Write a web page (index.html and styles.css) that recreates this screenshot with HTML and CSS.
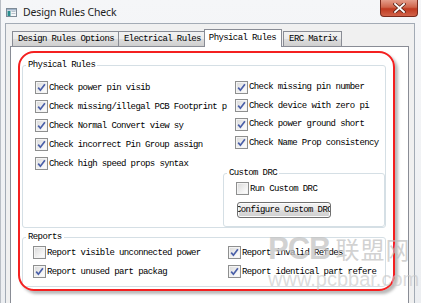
FILE: index.html
```html
<!DOCTYPE html>
<html>
<head>
<meta charset="utf-8">
<link rel="stylesheet" href="styles.css">
</head>
<body>
<div class="window">
  <div class="titlebar">
    <svg class="appicon" width="11" height="9" viewBox="0 0 11 9">
      <rect x="0.5" y="0.5" width="10" height="8" fill="#f4f6f8" stroke="#7d8a96"/>
      <rect x="1" y="1" width="9" height="1.5" fill="#9fb3c8"/>
      <rect x="1.5" y="3" width="3" height="5" fill="#2a8c8e"/>
      <rect x="5.5" y="3" width="4" height="1" fill="#b8c2cc"/>
      <rect x="5.5" y="5" width="4" height="1" fill="#b8c2cc"/>
    </svg>
    <span class="title">Design Rules Check</span>
    <div class="close">
      <svg width="13" height="10" viewBox="0 0 13 10">
        <path d="M2 1 L11 9 M11 1 L2 9" stroke="#5a2418" stroke-width="3.4" stroke-linecap="square"/>
        <path d="M2 1 L11 9 M11 1 L2 9" stroke="#ffffff" stroke-width="1.8" stroke-linecap="square"/>
      </svg>
    </div>
  </div>
  <div class="client">
    <div class="tabs">
      <div class="tab">Design Rules Options</div>
      <div class="tab">Electrical Rules</div>
      <div class="tab active">Physical Rules</div>
      <div class="tab">ERC Matrix</div>
    </div>
    <div class="panel">
      <fieldset class="group phys">
        <legend>Physical Rules</legend>
        <div class="physgrid">
          <div class="col col1">
            <div class="cb on"><span class="box"></span><span class="lbl">Check power pin visib</span></div>
            <div class="cb on"><span class="box"></span><span class="lbl">Check missing/illegal PCB Footprint p</span></div>
            <div class="cb on"><span class="box"></span><span class="lbl">Check Normal Convert view sy</span></div>
            <div class="cb on"><span class="box"></span><span class="lbl">Check incorrect Pin Group assign</span></div>
            <div class="cb on"><span class="box"></span><span class="lbl">Check high speed props syntax</span></div>
          </div>
          <div class="col col2">
            <div class="col2checks">
              <div class="cb on"><span class="box"></span><span class="lbl">Check missing pin number</span></div>
              <div class="cb on"><span class="box"></span><span class="lbl">Check device with zero pi</span></div>
              <div class="cb on"><span class="box"></span><span class="lbl">Check power ground short</span></div>
              <div class="cb on"><span class="box"></span><span class="lbl">Check Name Prop consistency</span></div>
            </div>
            <fieldset class="group custom">
              <legend>Custom DRC</legend>
              <div class="cb"><span class="box"></span><span class="lbl">Run Custom DRC</span></div>
              <div class="btn"><span>Configure Custom DRC</span></div>
            </fieldset>
          </div>
        </div>
      </fieldset>
      <fieldset class="group reports">
        <legend>Reports</legend>
        <div class="repgrid">
          <div class="col">
            <div class="cb"><span class="box"></span><span class="lbl">Report visible unconnected power</span></div>
            <div class="cb on"><span class="box"></span><span class="lbl">Report unused part packag</span></div>
          </div>
          <div class="col">
            <div class="cb on"><span class="box"></span><span class="lbl">Report invalid Refdes</span></div>
            <div class="cb on"><span class="box"></span><span class="lbl">Report identical part refere</span></div>
          </div>
        </div>
      </fieldset>
    </div>
  </div>
  <div class="annot"></div>
  <div class="watermark">
    <span class="wm-logo">PCB</span><span class="wm-cn">联盟网</span>
    <div class="wm-url">www.pcbbar.com</div>
  </div>
</div>
</body>
</html>
```
FILE: styles.css
```css
html, body {
  margin: 0;
  padding: 0;
  background: #eef0f3;
}
.window {
  position: relative;
  width: 421px;
  height: 303px;
  overflow: hidden;
  background: linear-gradient(#f5f6f8, #eceef1);
  border-left: 1px solid #b9bec5;
  box-sizing: border-box;
}
.titlebar {
  height: 23px;
  display: flex;
  align-items: center;
  position: relative;
  padding-left: 5px;
  box-sizing: border-box;
}
.appicon {
  margin-top: 1px;
  flex: none;
}
.title {
  font-family: "Noto Sans", sans-serif;
  font-size: 10.5px;
  letter-spacing: -0.15px;
  color: #1e1e1e;
  margin-left: 6px;
  margin-top: 1px;
}
.close {
  position: absolute;
  left: 379px;
  top: 0;
  width: 38px;
  height: 17px;
  box-sizing: border-box;
  border: 1px solid #7a2a1c;
  border-top: none;
  border-radius: 0 0 4px 4px;
  background: linear-gradient(#e59d8a, #d0654b 45%, #c0391f 55%, #d1634a);
  display: flex;
  align-items: center;
  justify-content: center;
}
.client {
  margin: 0 6px 0 4px;
  border: 1px solid #a3abb5;
  border-bottom: none;
  background: #f0f0f0;
  height: 290px;
  padding: 5px 5px 0 4px;
  box-sizing: border-box;
}
.tabs {
  display: flex;
  align-items: flex-end;
  height: 17px;
  padding-left: 2px;
  position: relative;
  z-index: 2;
}
.tab {
  font-family: "Liberation Mono", monospace;
  font-size: 9px;
  letter-spacing: -0.6px;
  color: #000;
  height: 15px;
  line-height: 14px;
  padding: 0 4px 0 5px;
  box-sizing: border-box;
  border: 1px solid #898c95;
  border-bottom: none;
  margin-right: -1px;
  background: linear-gradient(#f2f2f2, #ebebeb 50%, #dddddd 51%, #cfcfcf);
  white-space: nowrap;
}
.tab.active {
  height: 18px;
  line-height: 16px;
  margin-bottom: -1px;
  background: #ffffff;
  margin-left: -1px;
  margin-right: 1px;
  padding: 0 5px 0 4px;
}
.panel {
  background: #ffffff;
  border: 1px solid #898c95;
  border-bottom: none;
  height: 260px;
  padding: 0 0 0 11px;
  box-sizing: border-box;
}
fieldset.group {
  margin: 0;
  border: 1px solid #d5dfe5;
  border-radius: 3px;
  padding: 0;
  min-width: 0;
}
legend {
  font-family: "Liberation Mono", monospace;
  font-size: 9px;
  letter-spacing: -0.6px;
  line-height: 11px;
  padding: 0 2px 0 2px;
  margin-left: 3px;
  color: #000;
}
.phys {
  width: 364px;
  box-sizing: border-box;
  margin-top: 13px !important;
}
.physgrid {
  display: grid;
  grid-template-columns: 188px 1fr;
  padding-left: 12px;
  padding-top: 7px;
}
.col1 .cb {
  height: 19px;
}
.col2checks .cb {
  height: 18.5px;
}
.col2checks {
  padding-left: 12px;
}
.cb {
  display: flex;
  align-items: center;
  white-space: nowrap;
}
.box {
  flex: none;
  width: 13px;
  height: 13px;
  box-sizing: border-box;
  border: 1px solid #8e8f8f;
  background: linear-gradient(135deg, #d8d8d8, #f6f6f6 70%, #ffffff);
  box-shadow: inset 0 0 0 1px #f4f4f4;
  position: relative;
}
.cb.on .box::after {
  content: "";
  position: absolute;
  left: 1px;
  top: 1px;
  width: 9px;
  height: 9px;
  background: url("data:image/svg+xml;utf8,<svg xmlns='http://www.w3.org/2000/svg' width='9' height='9' viewBox='0 0 9 9'><path d='M1.2 4.6 L3.4 7.2 L7.9 1.2' fill='none' stroke='%234a5fa8' stroke-width='1.7'/></svg>") no-repeat;
}
.lbl {
  font-family: "Liberation Mono", monospace;
  font-size: 9px;
  letter-spacing: -0.6px;
  color: #000;
  margin-left: 1px;
  line-height: 12px;
}
.custom {
  margin-top: 16px !important;
  padding: 2px 0 8px 0 !important;
  box-sizing: border-box;
}
.custom legend {
  margin-left: 3px;
}
.custom .cb {
  height: 15px;
  margin-left: 12px;
}
.btn {
  margin-top: 6px;
  margin-left: 13px;
  width: 94px;
  height: 16px;
  box-sizing: border-box;
  border: 1px solid #707070;
  border-radius: 3px;
  background: linear-gradient(#f2f2f2, #ebebeb 50%, #dddddd 51%, #cfcfcf);
  box-shadow: inset 0 0 0 1px #fcfcfc;
  overflow: hidden;
  display: flex;
  justify-content: center;
  align-items: center;
}
.btn span {
  font-family: "Liberation Mono", monospace;
  font-size: 9px;
  letter-spacing: -0.6px;
  white-space: nowrap;
  color: #000;
}
.reports {
  width: 364px;
  box-sizing: border-box;
  margin-top: 4px !important;
}
.repgrid {
  display: grid;
  grid-template-columns: 195px 1fr;
  padding: 0 0 5px 10px;
}
.repgrid .cb {
  height: 19px;
}
.annot {
  position: absolute;
  left: 17px;
  top: 51px;
  width: 377px;
  height: 240px;
  box-sizing: border-box;
  border: 2px solid #f42020;
  border-radius: 16px;
  box-shadow: 3px 3px 3px rgba(0, 0, 0, 0.28);
}
.watermark {
  position: absolute;
  left: 267px;
  top: 234px;
  color: rgba(190, 190, 190, 0.7);
  white-space: nowrap;
}
.wm-logo {
  font-family: "Liberation Sans", sans-serif;
  font-weight: bold;
  font-size: 31px;
  letter-spacing: -1px;
  line-height: 30px;
  color: rgba(195, 195, 195, 0.75);
}
.wm-cn {
  font-family: "Noto Sans CJK SC", sans-serif;
  font-size: 24px;
  line-height: 30px;
  margin-left: 5px;
  letter-spacing: 1px;
}
.wm-url {
  font-family: "Liberation Sans", sans-serif;
  font-size: 20px;
  line-height: 24px;
  margin-top: 3px;
  color: rgba(200, 200, 200, 0.65);
}
```
